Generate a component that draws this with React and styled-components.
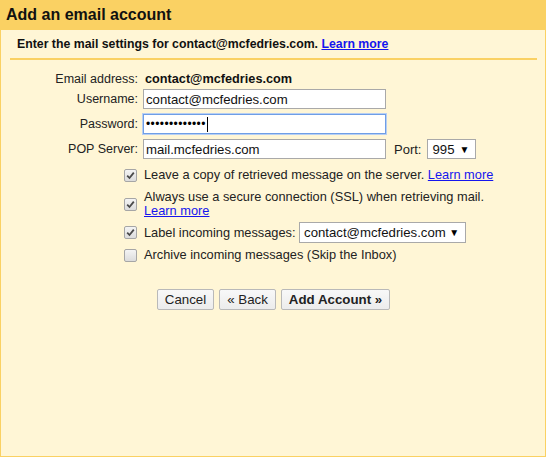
import React from "react";
import styled, { createGlobalStyle } from "styled-components";

const GlobalStyle = createGlobalStyle`
  html, body {
    margin: 0;
    padding: 0;
    background: #ffffff;
  }
  body {
    font-family: "Liberation Sans", Arial, sans-serif;
    font-size: 13px;
    color: #222;
  }
`;

const Frame = styled.div`
  width: 546px;
  height: 457px;
  display: flex;
  flex-direction: column;
  box-sizing: border-box;
`;

const Header = styled.div`
  height: 30px;
  line-height: 30px;
  padding-left: 6px;
  background-color: #fad163;
  font-size: 16px;
  font-weight: bold;
  color: #111;
`;

const Body = styled.div`
  flex: 1;
  background-color: #fff6d6;
  border: 1px solid #fad163;
  border-top: none;
  padding: 0 8px 0 9px;
`;

const Intro = styled.div`
  padding: 7px 0 0 7px;
  line-height: 15px;
  font-size: 12.3px;
  font-weight: bold;
  color: #111;
`;

const Link = styled.a`
  color: #1515ee;
  text-decoration: underline;
  cursor: pointer;
`;

const Divider = styled.div`
  height: 2px;
  margin-top: 6px;
  background-color: #fad163;
`;

const Form = styled.div`
  margin-top: 11px;
  display: flex;
  flex-direction: column;
`;

const Row = styled.div`
  display: flex;
  align-items: center;
  height: ${(p) => p.$h || 20}px;
  margin-top: ${(p) => p.$mt || 0}px;
`;

const Label = styled.div`
  width: 128px;
  text-align: right;
  margin-right: 5px;
  font-size: 12.5px;
  color: #222;
`;

const Value = styled.div`
  padding-left: 2px;
  font-weight: bold;
  font-size: 12.7px;
  color: #111;
`;

const Input = styled.div`
  box-sizing: border-box;
  width: 243px;
  height: 20px;
  padding-left: 2px;
  display: flex;
  align-items: center;
  background: #fff;
  border: 1px solid ${(p) => (p.$focus ? "#6f9ee6" : "#a9a9a9")};
  box-shadow: ${(p) => (p.$focus ? "0 0 0 1px #b7cff3" : "none")};
  color: #111;
  font-size: 13.2px;
`;

const Dots = styled.span`
  font-size: 12px;
  letter-spacing: 0.4px;
  color: #000;
`;

const Caret = styled.span`
  display: inline-block;
  width: 1px;
  height: 15px;
  margin-left: 1px;
  background: #000;
`;

const SideLabel = styled.div`
  margin-left: 8px;
  margin-right: 6px;
`;

const Select = styled.div`
  box-sizing: border-box;
  width: ${(p) => p.$w}px;
  height: ${(p) => p.$h || 20}px;
  padding: 0 6px 0 4px;
  display: flex;
  align-items: center;
  justify-content: space-between;
  background: #fff;
  border: 1px solid #a9a9a9;
  color: #111;
  font-size: 13.2px;
`;

const Arrow = styled.span`
  font-size: 10px;
  color: #000;
`;

const Options = styled.div`
  margin-left: 114px;
  display: flex;
  flex-direction: column;
`;

const CheckRow = styled.div`
  display: flex;
  align-items: center;
  margin-top: ${(p) => p.$mt}px;
  line-height: 14px;
  font-size: 12.8px;
  color: #222;
`;

const Box = styled.span`
  flex: none;
  box-sizing: border-box;
  width: 13px;
  height: 13px;
  margin-right: 7px;
  border: 1px solid #a6a6a6;
  border-radius: 2px;
  background: linear-gradient(#f4f4f4, #dcdcdc);
  display: flex;
  align-items: center;
  justify-content: center;
`;

const CheckText = styled.div`
  display: flex;
  align-items: center;
`;

const Buttons = styled.div`
  margin-top: 27px;
  display: flex;
  justify-content: center;
  gap: 5px;
`;

const Button = styled.button`
  height: 21px;
  padding: 0 7px;
  font-family: "Liberation Sans", Arial, sans-serif;
  font-size: 13.3px;
  font-weight: ${(p) => (p.$primary ? "bold" : "normal")};
  color: #222;
  background: linear-gradient(#f8f8f8, #ececec);
  border: 1px solid #b9b9b9;
  border-radius: 2px;
`;

function Check({ on }) {
  return (
    <Box>
      {on && (
        <svg width="9" height="9" viewBox="0 0 9 9">
          <path
            d="M1.2 4.6 L3.5 7 L7.8 1.6"
            fill="none"
            stroke="#4a4a4a"
            strokeWidth="1.8"
          />
        </svg>
      )}
    </Box>
  );
}

function App() {
  return (
    <>
      <GlobalStyle />
      <Frame>
        <Header>Add an email account</Header>
        <Body>
          <Intro>
            Enter the mail settings for contact@mcfedries.com.{" "}
            <Link>Learn more</Link>
          </Intro>
          <Divider />
          <Form>
            <Row $h={15}>
              <Label>Email address:</Label>
              <Value>contact@mcfedries.com</Value>
            </Row>
            <Row $mt={3}>
              <Label>Username:</Label>
              <Input>contact@mcfedries.com</Input>
            </Row>
            <Row $mt={5}>
              <Label>Password:</Label>
              <Input $focus>
                <Dots>•••••••••••••</Dots>
                <Caret />
              </Input>
            </Row>
            <Row $mt={5}>
              <Label>POP Server:</Label>
              <Input>mail.mcfedries.com</Input>
              <SideLabel>Port:</SideLabel>
              <Select $w={49}>
                995
                <Arrow>▼</Arrow>
              </Select>
            </Row>
          </Form>
          <Options>
            <CheckRow $mt={9}>
              <Check on />
              <CheckText>
                Leave a copy of retrieved message on the server.&nbsp;
                <Link>Learn more</Link>
              </CheckText>
            </CheckRow>
            <CheckRow $mt={8}>
              <Check on />
              <div>
                Always use a secure connection (SSL) when retrieving mail.
                <br />
                <Link>Learn more</Link>
              </div>
            </CheckRow>
            <CheckRow $mt={4}>
              <Check on />
              <CheckText>
                Label incoming messages:&nbsp;
                <Select $w={167} $h={21}>
                  contact@mcfedries.com
                  <Arrow>▼</Arrow>
                </Select>
              </CheckText>
            </CheckRow>
            <CheckRow $mt={5}>
              <Check />
              <CheckText>Archive incoming messages (Skip the Inbox)</CheckText>
            </CheckRow>
          </Options>
          <Buttons>
            <Button>Cancel</Button>
            <Button>« Back</Button>
            <Button $primary>Add Account »</Button>
          </Buttons>
        </Body>
      </Frame>
    </>
  );
}

export default App;
